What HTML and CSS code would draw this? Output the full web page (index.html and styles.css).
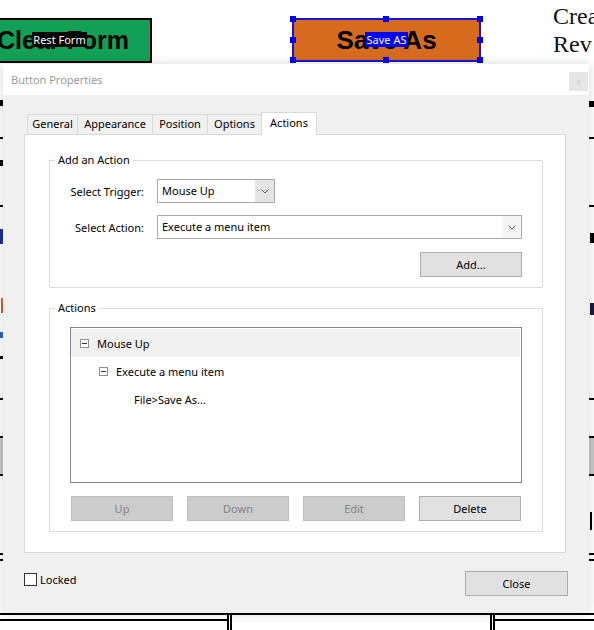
FILE: index.html
```html
<!DOCTYPE html>
<html lang="en">
<head>
<meta charset="utf-8">
<title>Button Properties</title>
<link rel="stylesheet" href="styles.css">
</head>
<body>
<div class="page">
  <div class="pdf">
    <div class="hline l-137"></div>
    <div class="hline l-205"></div>
    <div class="hline l-398"></div>
    <div class="band"></div>
    <div class="hline l-553"></div>
    <div class="hline l-559"></div>
    <div class="hline l-613"></div>
    <div class="hline l-619a"></div>
    <div class="hline l-619b"></div>
    <div class="vline v1"></div>
    <div class="vline v2"></div>
    <div class="vline v3"></div>
    <div class="vline v4"></div>
    <div class="mark m-a"></div>
    <div class="mark m-b"></div>
    <div class="mark m-c"></div>
    <div class="mark m-d"></div>
    <div class="mark m-e"></div>
    <div class="mark m-f"></div>
    <div class="mark m-g"></div>
    <div class="mark m-h"></div>
    <div class="mark m-i"></div>
    <div class="mark m-j"></div>

    <div class="field f-clear">Clear Form</div>
    <div class="tip tip-rest">Rest Form</div>

    <div class="field f-save">Save As
      <span class="handle h-tl"></span><span class="handle h-tm"></span><span class="handle h-tr"></span>
      <span class="handle h-ml"></span><span class="handle h-mr"></span>
      <span class="handle h-bl"></span><span class="handle h-bm"></span><span class="handle h-br"></span>
    </div>
    <div class="tip tip-save">Save AS</div>

    <div class="serif">Crea<br>Rev</div>
  </div>

  <div class="dialog">
    <div class="titlebar">
      <span class="title">Button Properties</span>
      <span class="xbtn">x</span>
    </div>
    <div class="dbody">
      <div class="tabs">
        <span class="tab t-general">General</span>
        <span class="tab t-appearance">Appearance</span>
        <span class="tab t-position">Position</span>
        <span class="tab t-options">Options</span>
        <span class="tab t-actions active">Actions</span>
      </div>
      <div class="panel">
        <fieldset class="group">
          <legend>Add an Action</legend>
          <div class="gbody form">
            <span class="flabel">Select Trigger:</span>
            <div class="select trigger"><span class="sval">Mouse Up</span><span class="arrow"><svg width="8" height="5" viewBox="0 0 8 5"><path d="M0.5 0.5 L4 4 L7.5 0.5" fill="none" stroke="#5a5a5a" stroke-width="1"/></svg></span></div>
            <span class="flabel">Select Action:</span>
            <div class="select action"><span class="sval">Execute a menu item</span><span class="arrow"><svg width="8" height="5" viewBox="0 0 8 5"><path d="M0.5 0.5 L4 4 L7.5 0.5" fill="none" stroke="#5a5a5a" stroke-width="1"/></svg></span></div>
            <button class="btn add">Add...</button>
          </div>
        </fieldset>

        <fieldset class="group second">
          <legend>Actions</legend>
          <div class="gbody">
            <div class="tree">
              <div class="node l0 sel"><svg class="toggle" width="9" height="9" viewBox="0 0 9 9"><rect x="0.5" y="0.5" width="8" height="8" fill="#fff" stroke="#919191"/><path d="M2 4.5h5" stroke="#333"/></svg>Mouse Up</div>
              <div class="node l1"><svg class="toggle" width="9" height="9" viewBox="0 0 9 9"><rect x="0.5" y="0.5" width="8" height="8" fill="#fff" stroke="#919191"/><path d="M2 4.5h5" stroke="#333"/></svg>Execute a menu item</div>
              <div class="node l2">File&gt;Save As...</div>
            </div>
            <div class="btnrow">
              <button class="btn disabled">Up</button>
              <button class="btn disabled">Down</button>
              <button class="btn disabled">Edit</button>
              <button class="btn">Delete</button>
            </div>
          </div>
        </fieldset>
      </div>
      <div class="footer">
        <label class="locked"><span class="check"></span>Locked</label>
        <button class="btn close">Close</button>
      </div>
    </div>
  </div>
</div>
</body>
</html>
```

FILE: styles.css
```css
* { box-sizing: border-box; }
html, body { margin: 0; padding: 0; }
body {
  width: 594px;
  height: 630px;
  overflow: hidden;
  background: #fff;
  font-family: "Noto Sans", "Open Sans", sans-serif;
  font-size: 11px;
  color: #000;
}
.page { position: relative; width: 594px; height: 630px; overflow: hidden; }

/* ---------- background PDF page ---------- */
.pdf { position: absolute; left: 0; top: 0; width: 594px; height: 630px; }
.hline { position: absolute; left: 0; right: 0; height: 2px; background: #000; }
.l-137 { top: 137px; }
.l-205 { top: 205px; }
.l-398 { top: 398px; }
.l-553 { top: 553px; }
.l-559 { top: 559px; }
.l-613 { top: 613px; }
.l-619a { top: 619px; right: auto; width: 228px; }
.l-619b { top: 619px; left: 494px; }
.band {
  position: absolute; left: 0; right: 0; top: 436px; height: 40px;
  background: #c6c6c6; border-top: 2px solid #000; border-bottom: 2px solid #000;
}
.vline { position: absolute; top: 613px; bottom: 0; width: 2px; background: #000; }
.v1 { left: 227px; }
.v2 { left: 230px; }
.v3 { left: 490px; }
.v4 { left: 493px; }
.mark { position: absolute; background: #000; }
.m-a { left: 0; top: 100px; width: 4px; height: 6px; }
.m-b { left: 0; top: 160px; width: 4px; height: 6px; }
.m-c { left: 0; top: 229px; width: 3px; height: 15px; background: #1c2f8c; }
.m-d { left: 1px; top: 298px; width: 2px; height: 15px; background: #c9681f; }
.m-e { left: 0; top: 332px; width: 3px; height: 6px; background: #2a64b0; }
.m-f { left: 0; top: 356px; width: 3px; height: 3px; }
.m-g { left: 589px; top: 101px; width: 5px; height: 6px; }
.m-h { left: 590px; top: 233px; width: 4px; height: 10px; }
.m-i { left: 590px; top: 303px; width: 4px; height: 12px; background: #1a1a40; }
.m-j { left: 590px; top: 512px; width: 2px; height: 18px; }

.field {
  position: absolute;
  display: flex; align-items: center; justify-content: center;
  border: 2px solid #000;
  font: bold 25px "Liberation Sans", Arial, sans-serif;
  color: #000;
  white-space: nowrap;
}
.f-clear { left: -26px; top: 18px; width: 178px; height: 45px; background: #12a057; }
.f-save { left: 292px; top: 18px; width: 189px; height: 44px; background: #d66b1e; border-color: #1515e0; font-size: 26px; }
.handle { position: absolute; width: 6px; height: 6px; background: #0000ee; }
.h-tl { left: -4px; top: -4px; }
.h-tm { left: 89px; top: -4px; }
.h-tr { left: 183px; top: -4px; }
.h-ml { left: -4px; top: 17px; }
.h-mr { left: 183px; top: 17px; }
.h-bl { left: -4px; top: 37px; }
.h-bm { left: 89px; top: 37px; }
.h-br { left: 183px; top: 37px; }

.tip {
  position: absolute; height: 15px; line-height: 15px;
  color: #fff; font-size: 11px; text-align: center; white-space: nowrap;
}
.tip-rest { left: 32px; top: 32px; width: 55px; background: #000; }
.tip-save { left: 365px; top: 32px; width: 43px; background: #0000ff; }

.serif {
  position: absolute; left: 553px; top: 2px;
  font: 24px/28px "Liberation Serif", "Times New Roman", serif;
  color: #111; white-space: nowrap;
}

/* ---------- dialog ---------- */
.dialog {
  position: absolute; left: 3px; top: 64px; width: 586px; height: 549px;
  background: #f0f0f0;
  box-shadow: 0 0 10px rgba(0, 0, 0, 0.16);
  display: flex; flex-direction: column;
}
.titlebar {
  height: 31px; flex: none;
  background: #fff;
  display: flex; justify-content: space-between; align-items: flex-start;
  padding: 0 1px 0 8px;
}
.title { color: #9a9a9a; line-height: 31px; }
.xbtn {
  margin-top: 8px;
  width: 19px; height: 19px;
  background: #e6e6e6; color: #cfcfcf;
  font-size: 8px; line-height: 19px; text-align: center;
}
.dbody { flex: 1; padding: 17px 23px 0 21px; display: flex; flex-direction: column; }

.tabs { display: flex; align-items: flex-end; padding-left: 3px; }
.tab {
  height: 20px; line-height: 18px;
  padding: 0;
  text-align: center;
  border: 1px solid #d9d9d9; border-bottom: 0;
  margin-right: -1px;
  background: #f0f0f0;
  white-space: nowrap;
}
.t-general { width: 51px; }
.t-appearance { width: 76px; }
.t-position { width: 56px; }
.t-options { width: 55px; }
.t-actions { width: 56px; }
.tab.active {
  height: 23px; line-height: 20px;
  margin-bottom: -1px;
  background: #fff;
  position: relative; z-index: 1;
}

.panel {
  height: 419px;
  background: #fff;
  border: 1px solid #d9d9d9;
  padding: 17px 22px 0 24px;
}
.group { margin: 0; padding: 0; border: 1px solid #dcdcdc; min-width: 0; }
.group legend { margin-left: 5px; padding: 0 3px; line-height: 16px; }
.group.second { margin-top: 12px; }
.gbody { padding: 11px 20px 10px 20px; }
.form {
  padding-left: 0;
  display: grid;
  grid-template-columns: 94px 1fr;
  column-gap: 13px;
  row-gap: 12px;
  align-items: center;
}
.flabel { text-align: right; white-space: nowrap; }
.select {
  height: 24px;
  border: 1px solid #a9a9a9;
  background: #fff;
  display: flex; align-items: stretch;
}
.select.trigger { width: 118px; }
.sval { flex: 1; padding-left: 4px; line-height: 22px; white-space: nowrap; }
.arrow { width: 19px; display: flex; align-items: center; justify-content: center; }
.trigger .arrow { background: #e5e5e5; }
.action .arrow { background: #f5f5f5; }

.btn {
  height: 25px;
  border: 1px solid #adadad;
  background: #e1e1e1;
  color: #000;
  font: inherit;
  padding: 0;
}
.btn.disabled { background: #cccccc; border-color: #bfbfbf; color: #858585; }
.add { grid-column: 2; justify-self: end; width: 102px; margin-top: 1px; }

.tree {
  height: 156px;
  border: 1px solid #828790;
  padding: 1px 1px 1px 0;
  background: #fff;
}
.node { height: 28px; display: flex; align-items: center; white-space: nowrap; }
.node.sel { background: #f0f0f0; }
.node.l0 { padding-left: 9px; }
.node.l1 { padding-left: 28px; }
.node.l2 { padding-left: 63px; }
.toggle { margin-right: 8px; flex: none; }

.btnrow {
  margin-top: 13px;
  padding-left: 1px;
  display: grid;
  grid-template-columns: repeat(4, 102px);
  column-gap: 14px;
}

.footer {
  margin-top: 18px;
  display: flex; justify-content: space-between; align-items: flex-start;
}
.locked { display: flex; align-items: center; margin-top: 1px; line-height: 15px; }
.check { width: 13px; height: 13px; border: 1px solid #333; background: #fff; margin-right: 3px; }
.close { width: 103px; margin-right: -2px; }
```
